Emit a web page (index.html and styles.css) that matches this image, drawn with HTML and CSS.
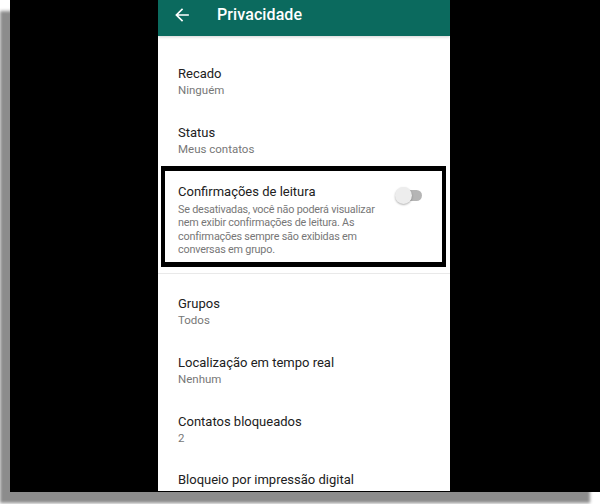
FILE: index.html
```html
<!DOCTYPE html>
<html lang="pt-BR">
<head>
<meta charset="utf-8">
<title>Privacidade</title>
<link rel="stylesheet" href="styles.css">
</head>
<body>
<div class="frame">
  <div class="screen">
    <header class="appbar">
      <svg class="back" width="14" height="14" viewBox="0 0 14 14" aria-hidden="true">
        <path d="M13 7H1.8M7 1.4L1.4 7 7 12.6" fill="none" stroke="#fff" stroke-width="1.7" stroke-linecap="square"/>
      </svg>
      <h1 class="title">Privacidade</h1>
    </header>
    <div class="list">
      <section class="section first">
        <div class="item"><div class="label">Recado</div><div class="value">Ninguém</div></div>
        <div class="item"><div class="label">Status</div><div class="value">Meus contatos</div></div>
        <div class="item toggle-item">
          <div class="text">
            <div class="label">Confirmações de leitura</div>
            <div class="desc">Se desativadas, você não poderá visualizar nem exibir confirmações de leitura. As confirmações sempre são exibidas em conversas em grupo.</div>
          </div>
          <div class="switch"><span class="track"></span><span class="thumb"></span></div>
        </div>
      </section>
      <section class="section second">
        <div class="item"><div class="label">Grupos</div><div class="value">Todos</div></div>
        <div class="item"><div class="label">Localização em tempo real</div><div class="value">Nenhum</div></div>
        <div class="item"><div class="label">Contatos bloqueados</div><div class="value">2</div></div>
        <div class="item"><div class="label">Bloqueio por impressão digital</div><div class="value">Desativado</div></div>
      </section>
    </div>
    <div class="highlight"></div>
  </div>
</div>
</body>
</html>
```
FILE: styles.css
```css
* { box-sizing: border-box; }
html, body { margin: 0; padding: 0; }
body {
  width: 600px;
  height: 504px;
  background: #ffffff;
  overflow: hidden;
  font-family: Roboto, "Noto Sans", "Liberation Sans", sans-serif;
}
.frame {
  width: 590px;
  height: 492px;
  margin-left: 10px;
  background: #000;
  box-shadow: -10px 11px 3px #8c8c8c;
  padding-left: 148px;
}
.screen {
  position: relative;
  width: 292px;
  height: 491px;
  background: #fff;
  overflow: hidden;
}
.appbar {
  height: 36px;
  background: #0b6a5e;
  display: flex;
  align-items: center;
  padding: 0 0 7px 17px;
  box-shadow: 0 1px 3px rgba(0,0,0,0.18);
  position: relative;
  z-index: 1;
}
.back { display: block; margin-right: 28px; }
.title {
  margin: 0;
  color: #fff;
  font-size: 16px;
  font-weight: 500;
  letter-spacing: 0.1px;
}
.list { padding-top: 16px; }
.section.second {
  border-top: 1px solid #e9e9e9;
  padding-top: 8px;
}
.item { padding: 13px 20px 13px 20px; }
.second .item { padding-bottom: 12.7px; }
.label {
  font-size: 13px;
  line-height: 17px;
  color: #212121;
}
.value {
  font-size: 11.5px;
  line-height: 16px;
  color: #777;
}
.toggle-item {
  display: flex;
  align-items: flex-start;
  padding-bottom: 17px;
}
.text { width: 217px; }
.desc {
  font-size: 10.8px;
  letter-spacing: -0.2px;
  line-height: 13.3px;
  color: #777;
  margin-top: 3px;
}
.switch {
  position: relative;
  width: 27px;
  height: 17px;
  margin-top: 4px;
}
.track {
  position: absolute;
  left: 3px; top: 3px;
  width: 24px; height: 11px;
  border-radius: 6px;
  background: #b5b5b5;
}
.thumb {
  position: absolute;
  left: 0; top: 0;
  width: 17px; height: 17px;
  border-radius: 50%;
  background: #ededed;
  box-shadow: 0 1px 2px rgba(0,0,0,0.3);
}
.highlight {
  position: absolute;
  left: 3px;
  top: 166px;
  width: 285px;
  height: 101px;
  border: 4px solid #000;
  border-top-width: 5px;
  border-bottom-width: 5px;
  pointer-events: none;
}
```
